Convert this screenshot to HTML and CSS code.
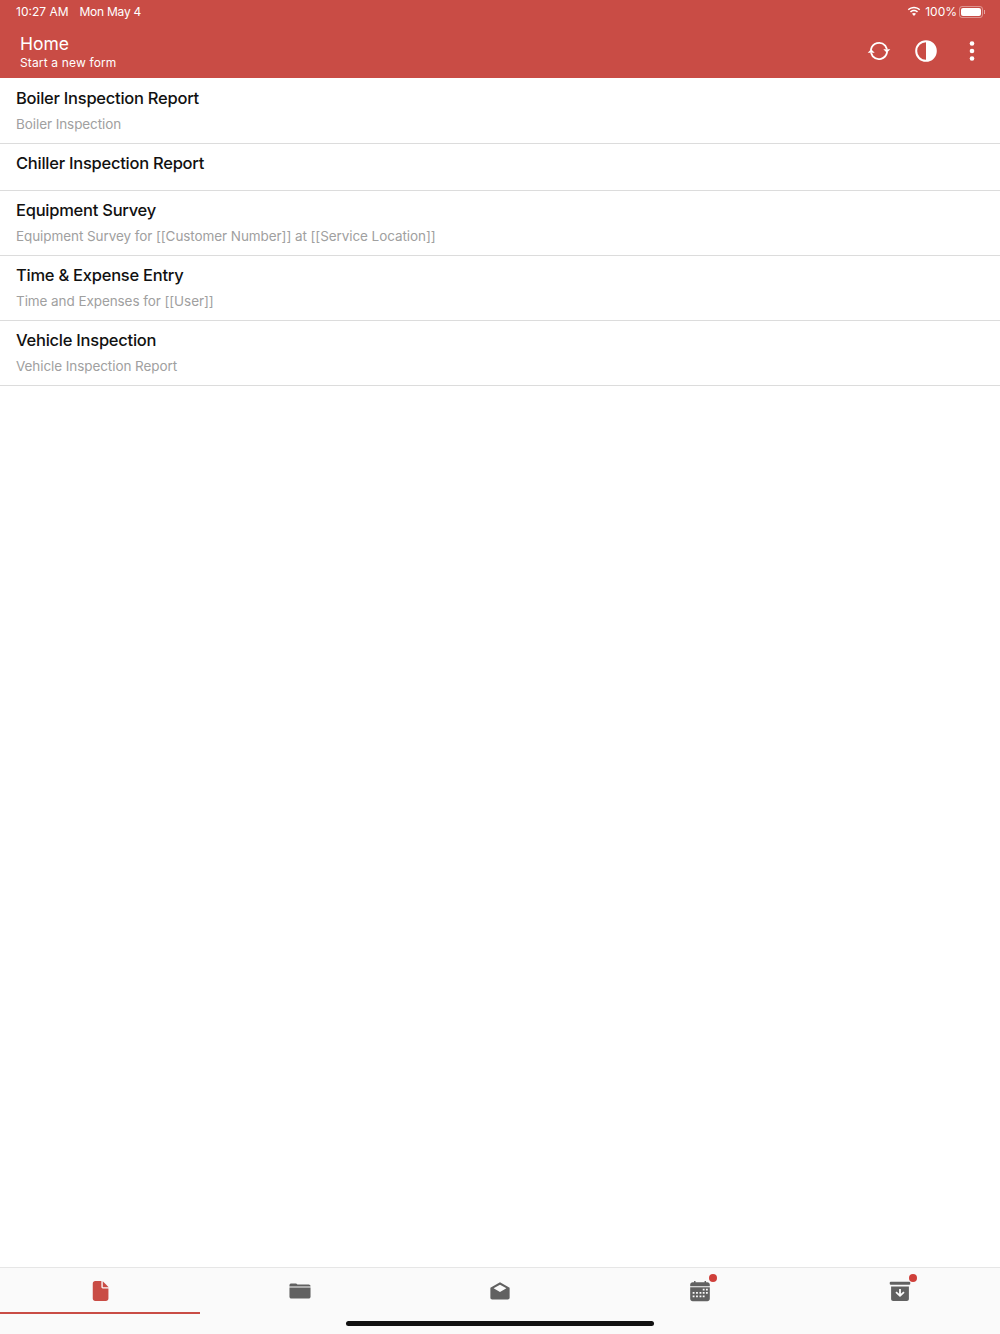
FILE: index.html
```html
<!DOCTYPE html>
<html lang="en">
<head>
    <meta charset="UTF-8">
    <meta name="viewport" content="width=device-width, initial-scale=1.0">
    <title>Home</title>
    <link rel="stylesheet" href="styles.css">
</head>
<body>

    <div class="app-top">
        <div class="status-bar">
            <div class="status-time"><span>10:27 AM</span><span class="status-date">Mon May 4</span></div>
            <div class="status-right">
                <svg class="wifi-icon" viewBox="0 0 16 12"><path d="M8 2.200c2.300 0 4.400.9 6 2.400l1.100-1.200C13.200 1.600 10.700.5 8 .5S2.800 1.600.9 3.400L2 4.600c1.600-1.500 3.700-2.400 6-2.400z"/><path d="M8 5.800c1.300 0 2.500.5 3.400 1.400l1.200-1.200C11.400 4.800 9.800 4.100 8 4.100s-3.400.7-4.600 1.900l1.200 1.200C5.500 6.300 6.700 5.800 8 5.800z"/><path d="M8 7.700c-.9 0-1.700.4-2.300.9L8 11l2.300-2.400c-.6-.5-1.400-.9-2.300-.9z"/></svg>
                <span>100%</span>
                <div class="battery"><div class="battery-fill"></div></div>
                <div class="battery-cap"></div>
            </div>
        </div>
        <div class="app-bar">
            <div class="app-title">
                <div class="title-main">Home</div>
                <div class="title-sub">Start a new form</div>
            </div>
            <div class="app-actions">
                <svg class="action-icon" viewBox="0 0 24 24" fill="none" stroke="#fff" stroke-width="1.800" stroke-linecap="round"><path d="M4 10.500A8.300 8.300 0 0 1 18.200 6.600l1.500 3"/><path d="M20 13.500A8.300 8.300 0 0 1 5.800 17.400l-1.500-3"/><path d="M16.300 10.200h7l-3.500 3.600z" fill="#fff" stroke="none"/><path d="M.7 13.800h7L4.200 10.200z" fill="#fff" stroke="none"/></svg>
                <svg class="action-icon" viewBox="0 0 24 24"><circle cx="12" cy="12" r="9.800" fill="none" stroke="#fff" stroke-width="2"/><path d="M12 2.200a9.800 9.800 0 0 1 0 19.600z" fill="#fff"/></svg>
                <svg class="action-icon" viewBox="0 0 24 24" fill="#fff"><circle cx="12" cy="4.500" r="2.300"/><circle cx="12" cy="12" r="2.300"/><circle cx="12" cy="19.500" r="2.300"/></svg>
            </div>
        </div>
    </div>

    <div class="form-list">
        <div class="form-row">
            <div class="form-name">Boiler Inspection Report</div>
            <div class="form-desc">Boiler Inspection</div>
        </div>
        <div class="form-row no-desc">
            <div class="form-name">Chiller Inspection Report</div>
        </div>
        <div class="form-row">
            <div class="form-name">Equipment Survey</div>
            <div class="form-desc">Equipment Survey for [[Customer Number]] at [[Service Location]]</div>
        </div>
        <div class="form-row">
            <div class="form-name">Time &amp; Expense Entry</div>
            <div class="form-desc">Time and Expenses for [[User]]</div>
        </div>
        <div class="form-row">
            <div class="form-name">Vehicle Inspection</div>
            <div class="form-desc">Vehicle Inspection Report</div>
        </div>
    </div>

    <div class="tab-bar">
        <div class="tab active">
            <svg class="tab-icon" viewBox="0 0 24 24" fill="#c94c45"><path d="M6.800 1h6.700v6.700c0 .9.700 1.600 1.600 1.600h6.100v11c0 1.500-1.200 2.700-2.700 2.700H6.800c-1.500 0-2.700-1.200-2.700-2.700V3.700C4.100 2.200 5.300 1 6.800 1z"/><path d="M15 1.300l6.500 6.500H15z"/></svg>
        </div>
        <div class="tab">
            <svg class="tab-icon" viewBox="0 0 24 24" fill="#616161"><path d="M.5 7V5.500C.5 4.200 1.500 3.700 2.500 3.700H7c1 0 1.700.4 2.300 1.300h12.200c1.100 0 2 .8 2 2z"/><path d="M.5 8.300h23v10c0 1.200-1 2-2 2h-19c-1.100 0-2-.8-2-2z"/></svg>
        </div>
        <div class="tab">
            <svg class="tab-icon" viewBox="0 0 24 24" fill="#616161"><path d="M12 2.500 1.500 8.500v10.800c0 1 .9 1.900 2 1.900h17c1.100 0 2-.9 2-1.900V8.500zM12 5.200l7 3.900-7 4.100-7-4.100z" fill-rule="evenodd"/></svg>
        </div>
        <div class="tab">
            <svg class="tab-icon" viewBox="0 0 24 24" fill="#616161"><path d="M5.500 1h1.600v2.500H5.500zM17 1h1.600v2.500H17z"/><path fill-rule="evenodd" d="M4 2.500h16c1.500 0 2.700 1.200 2.700 2.700v1.500H1.300V5.200C1.300 3.700 2.500 2.500 4 2.500zM1.300 8h21.400v12.500c0 1.500-1.200 2.700-2.700 2.700H4c-1.500 0-2.700-1.200-2.700-2.700zM15 9.500h2v2h-2zm3.500 0h2v2h-2zM11.500 13h2v2h-2zM15 13h2v2h-2zm3.500 0h2v2h-2zM4 13h2v2H4zm3.700 0h2v2h-2zM4 16.800h2v2H4zm3.700 0h2v2h-2zm3.800 0h2v2h-2zm3.500 0h2v2h-2z"/></svg>
            <div class="tab-badge"></div>
        </div>
        <div class="tab">
            <svg class="tab-icon" viewBox="0 0 24 24" fill="#616161"><rect x=".8" y="1.800" width="22.400" height="3.400" rx="1.200"/><path fill-rule="evenodd" d="M2.300 7h19.400v13.800c0 1.200-1 2.200-2.200 2.200h-15c-1.200 0-2.200-1-2.200-2.200zM11 9.800v5.200l-2.700-2.500-1.300 1.300 5 4.800 5-4.800-1.300-1.300L13 15V9.800z"/></svg>
            <div class="tab-badge"></div>
        </div>
        <div class="home-indicator"></div>
    </div>

</body>
</html>
```

FILE: styles.css
```css
html, body {
    height: 100%;
}
body {
    font-family: Inter, "Liberation Sans", sans-serif;
    margin: 0;
    padding: 0;
    background: white;
    display: flex;
    flex-direction: column;
    height: 1334px;
    overflow: hidden;
}
.app-top {
    background: #c94c45;
    color: white;
    height: 78px;
    flex-shrink: 0;
}
.status-bar {
    height: 23px;
    display: flex;
    justify-content: space-between;
    align-items: center;
    padding: 0 15px 0 16px;
    font-size: 12px;
}
.status-time span {
    margin-right: 11px;
}
.status-date {
    letter-spacing: -0.25px;
}
.status-right {
    display: flex;
    align-items: center;
}
.wifi-icon {
    width: 14px;
    height: 11px;
    fill: white;
    margin-right: 4px;
}
.battery {
    width: 24px;
    height: 12px;
    margin-left: 2px;
    padding: 1px;
    border: 1px solid rgba(255, 255, 255, 0.4);
    border-radius: 3px;
    box-sizing: border-box;
}
.battery-fill {
    height: 100%;
    background: white;
    border-radius: 2px;
}
.battery-cap {
    width: 1px;
    height: 4px;
    margin-left: 1px;
    background: rgba(255, 255, 255, 0.5);
}
.app-bar {
    height: 55px;
    display: flex;
    justify-content: space-between;
    align-items: center;
    padding: 0 16px 0 20px;
    box-sizing: border-box;
}
.title-main {
    font-size: 17.5px;
    line-height: 22px;
    margin-top: 1px;
}
.title-sub {
    font-size: 12px;
    line-height: 15px;
    letter-spacing: 0.15px;
}
.app-actions {
    display: flex;
    gap: 22.5px;
    align-items: center;
    margin-top: 1px;
}
.action-icon {
    width: 24px;
    height: 24px;
}
.form-list {
    flex: 1;
    padding-top: 1px;
}
.form-row {
    height: 65px;
    box-sizing: border-box;
    padding: 8px 16px 0;
    border-bottom: 1px solid #dcdcdc;
}
.form-row.no-desc {
    height: 47px;
}
.form-name {
    font-size: 16.5px;
    font-weight: 500;
    line-height: 22px;
    letter-spacing: -0.25px;
    color: #111;
}
.form-desc {
    font-size: 13.5px;
    line-height: 18px;
    margin-top: 6px;
    letter-spacing: -0.08px;
    color: #a0a0a0;
}
.tab-bar {
    height: 67px;
    flex-shrink: 0;
    box-sizing: border-box;
    border-top: 1px solid #e6e6e6;
    background: #fafafa;
    display: flex;
    position: relative;
}
.tab {
    flex: 1;
    height: 46px;
    display: flex;
    align-items: flex-start;
    justify-content: center;
    padding-top: 12px;
    box-sizing: border-box;
    position: relative;
}
.tab.active {
    border-bottom: 2px solid #c94c45;
}
.tab-icon {
    width: 22px;
    height: 22px;
}
.tab-badge {
    position: absolute;
    top: 6px;
    left: 109px;
    width: 8px;
    height: 8px;
    border-radius: 50%;
    background: #cf3f3a;
}
.home-indicator {
    position: absolute;
    left: 346px;
    bottom: 8px;
    width: 308px;
    height: 5px;
    border-radius: 3px;
    background: #111;
}
```
